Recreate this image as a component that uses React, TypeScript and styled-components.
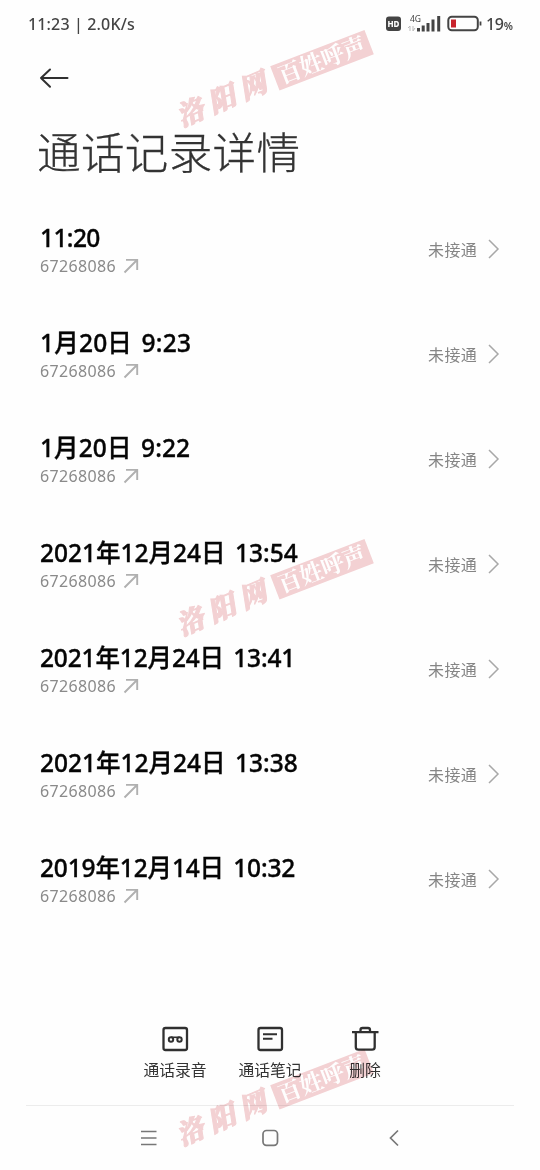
import React from "react";
import styled, { createGlobalStyle } from "styled-components";

const GlobalStyle = createGlobalStyle`
  * { box-sizing: border-box; }
  body {
    margin: 0;
    background: #fefefe;
    font-family: "Noto Sans", "Noto Sans CJK SC", sans-serif;
  }
`;

const Screen = styled.main`
  position: relative;
  width: 540px;
  height: 1170px;
  overflow: hidden;
  display: flex;
  flex-direction: column;
  background: #fefefe;
`;

const StatusBar = styled.header`
  height: 48px;
  padding: 0 27px 0 28px;
  display: flex;
  align-items: center;
  justify-content: space-between;
  color: #444;
`;

const Clock = styled.span`
  font-size: 16px;
  font-weight: 500;
  letter-spacing: 0.15px;
`;

const StatusIcons = styled.div`
  display: flex;
  align-items: center;
`;

const Battery = styled.span`
  width: 27px;
  font-size: 16px;
  font-weight: 500;
  letter-spacing: -0.3px;
  white-space: nowrap;
  small { font-size: 10.5px; font-weight: 600; }
`;

const TopBar = styled.div`
  height: 59px;
  padding: 18px 38px 0;
  svg { display: block; }
`;

const Title = styled.h1`
  margin: 0;
  height: 90px;
  padding-left: 37px;
  font-family: "Noto Sans CJK SC", sans-serif;
  font-size: 43.5px;
  font-weight: 300;
  line-height: 88px;
  letter-spacing: 0.4px;
  color: #333;
  -webkit-text-stroke: 0.3px #333;
`;

const List = styled.ul`
  margin: 0;
  padding: 0;
  list-style: none;
  height: 813px;
`;

const Row = styled.li`
  height: 105px;
  padding: 0 40px;
  display: flex;
  align-items: center;
  justify-content: space-between;
`;

const When = styled.div<{ $spacing: number }>`
  height: 32px;
  line-height: 31px;
  font-size: 24.5px;
  font-weight: 550;
  letter-spacing: ${(p) => p.$spacing}px;
  word-spacing: 3px;
  color: #050505;
  -webkit-text-stroke: 0.35px #050505;
  white-space: nowrap;
`;

const Phone = styled.div`
  height: 24px;
  display: flex;
  align-items: center;
  gap: 7px;
  font-size: 16px;
  letter-spacing: 0.35px;
  color: #8a8a8a;
`;

const Result = styled.div`
  display: flex;
  align-items: center;
  gap: 10px;
  margin-bottom: 2px;
  font-size: 16px;
  letter-spacing: 0.3px;
  color: #858585;
`;

const Actions = styled.div`
  height: 95px;
  padding: 14px 0 0 127.5px;
  display: flex;
`;

const Action = styled.div`
  width: 95px;
  display: flex;
  flex-direction: column;
  align-items: center;
  gap: 1px;
  font-size: 15.8px;
  line-height: 30px;
  color: #333;
  svg { margin-right: 1px; }
`;

const NavBar = styled.nav`
  height: 65px;
  margin: 0 26px;
  padding: 0 114px;
  border-top: 1px solid #ececec;
  display: grid;
  grid-template-columns: 122px 1fr auto;
  align-items: center;
`;

const Watermark = styled.div<{ $top: number }>`
  position: absolute;
  left: 170px;
  top: ${(p) => p.$top}px;
  width: 206px;
  height: 28px;
  display: flex;
  align-items: center;
  transform: rotate(-21deg);
  mix-blend-mode: multiply;
  pointer-events: none;
  font-family: "Noto Serif CJK SC", "Noto Sans CJK SC", sans-serif;
  color: #f4d2d4;
`;

const SiteName = styled.span`
  width: 105px;
  font-size: 27px;
  font-style: italic;
  font-weight: 900;
  line-height: 28px;
  letter-spacing: 7px;
  white-space: nowrap;
  -webkit-text-stroke: 1px #f4d2d4;
  transform: translateY(-1px) rotate(-2deg);
`;

const Stamp = styled.span`
  width: 101px;
  height: 26px;
  background: #f4d2d4;
  color: #fff;
  font-size: 23px;
  font-weight: 700;
  line-height: 24px;
  text-align: center;
`;

const calls = [
  { when: "11:20", spacing: -0.6 },
  { when: "1月20日 9:23", spacing: 0.2 },
  { when: "1月20日 9:22", spacing: 0.1 },
  { when: "2021年12月24日 13:54", spacing: 0 },
  { when: "2021年12月24日 13:41", spacing: -0.15 },
  { when: "2021年12月24日 13:38", spacing: 0 },
  { when: "2019年12月14日 10:32", spacing: -0.15 },
];

const StatusGlyphs = () => (
  <svg width="101" height="24" viewBox="385 12 101 24" fill="none">
    <rect x="386" y="16.500" width="15" height="14.500" rx="3" fill="#444" />
    <text x="393.500" y="27" textAnchor="middle" fontSize="8" fontWeight="800" fill="#fff">HD</text>
    <text x="410" y="21.500" fontSize="8.500" fill="#444">4G</text>
    <path d="M410 31v-5l-2 2M413 26v5l2-3" stroke="#bbb" strokeWidth="1" />
    <path d="M418.500 31.500v-3.500M423.200 31.500v-6M428 31.500v-8.500M433 31.500v-12M438.700 31.500v-15.500" stroke="#444" strokeWidth="3" />
    <rect x="448.300" y="16.800" width="29.500" height="13.500" rx="3.500" stroke="#444" strokeWidth="2" />
    <rect x="451" y="19.500" width="5" height="8" fill="#c8232c" />
    <path d="M480.500 21.500v4" stroke="#444" strokeWidth="1.800" />
  </svg>
);

const BackArrow = () => (
  <svg width="32" height="24" viewBox="38 66 32 24" fill="none" stroke="#303030" strokeWidth="2" strokeLinecap="round" strokeLinejoin="round">
    <path d="M67.500 78H41M50 69.500L41 78l9 8.800" />
  </svg>
);

const OutgoingArrow = () => (
  <svg width="16" height="16" viewBox="0 0 16 16" fill="none" stroke="#b0b0b0" strokeWidth="1.900">
    <path d="M1.500 14.500L14 2M3 1.900h11.200V12" />
  </svg>
);

const Chevron = () => (
  <svg width="13" height="20" viewBox="0 0 13 20" fill="none" stroke="#a8a8a8" strokeWidth="1.500">
    <path d="M2 1l9 9-9 9" />
  </svg>
);

const RecordIcon = () => (
  <svg width="30" height="30" viewBox="0 0 30 30" fill="none" stroke="#303030" strokeWidth="2.300">
    <rect x="3.500" y="4" width="23.500" height="22" rx="2" />
    <g strokeWidth="2">
      <circle cx="11" cy="15.500" r="2.200" />
      <circle cx="19.500" cy="15.500" r="2.200" />
      <path d="M11 13.300h8.500" strokeWidth="1.600" />
    </g>
  </svg>
);

const NoteIcon = () => (
  <svg width="30" height="30" viewBox="0 0 30 30" fill="none" stroke="#303030" strokeWidth="2.300">
    <rect x="3.500" y="4" width="23.500" height="22" rx="2" />
    <path d="M8 10.300h14M8 14.800h9.500" strokeWidth="2" />
  </svg>
);

const TrashIcon = () => (
  <svg width="30" height="30" viewBox="0 0 30 30" fill="none" stroke="#303030" strokeWidth="2.300">
    <path d="M2 8.200h26.500M5.800 8.200v14.800q0 2.700 2.700 2.700h13.500q2.700 0 2.700-2.700V8.200M10.500 8V6q0-2 2-2h5.500q2 0 2 2V8" />
  </svg>
);

export default function App() {
  return (
    <>
      <GlobalStyle />
      <Screen>
        <StatusBar>
          <Clock>11:23 | 2.0K/s</Clock>
          <StatusIcons>
            <StatusGlyphs />
            <Battery>19<small>%</small></Battery>
          </StatusIcons>
        </StatusBar>
        <TopBar><BackArrow /></TopBar>
        <Title>通话记录详情</Title>
        <List>
          {calls.map((call) => (
            <Row key={call.when}>
              <div>
                <When $spacing={call.spacing}>{call.when}</When>
                <Phone>67268086<OutgoingArrow /></Phone>
              </div>
              <Result>未接通<Chevron /></Result>
            </Row>
          ))}
        </List>
        <Actions>
          <Action><RecordIcon />通话录音</Action>
          <Action><NoteIcon />通话笔记</Action>
          <Action><TrashIcon />删除</Action>
        </Actions>
        <NavBar>
          <svg width="18" height="18" viewBox="0 0 18 18" stroke="#777" strokeWidth="1.500">
            <path d="M1 2.500h15.500M1 9h15.500M1 15.500h15.500" />
          </svg>
          <svg width="18" height="18" viewBox="0 0 18 18" fill="none" stroke="#777" strokeWidth="1.700">
            <rect x="1" y="1.500" width="14.500" height="14.800" rx="3.500" />
          </svg>
          <svg width="12" height="18" viewBox="0 0 12 18" fill="none" stroke="#777" strokeWidth="1.700">
            <path d="M10 1.500L2.500 9l7.500 7.500" />
          </svg>
        </NavBar>
        {[65, 574, 1084].map((top) => (
          <Watermark key={top} $top={top}>
            <SiteName>洛阳网</SiteName>
            <Stamp>百姓呼声</Stamp>
          </Watermark>
        ))}
      </Screen>
    </>
  );
}
